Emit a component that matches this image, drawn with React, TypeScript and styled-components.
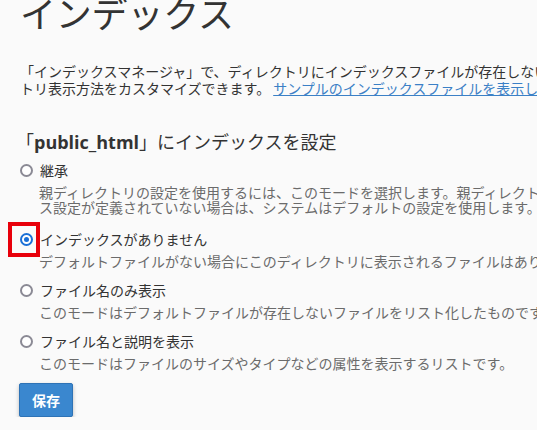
import React, { useState } from 'react'
import styled, { createGlobalStyle } from 'styled-components'

const GlobalStyle = createGlobalStyle`
  html, body {
    margin: 0;
    padding: 0;
    background: #fafafa;
    overflow: hidden;
  }
  body {
    font-family: 'Open Sans', 'Noto Sans CJK JP', sans-serif;
    color: #333333;
  }
`

const Page = styled.div`
  width: 630px;
  padding: 0 0 0 20px;
`

const Title = styled.h1`
  margin: -3px 0 0 0;
  font-size: 36px;
  font-weight: 400;
  line-height: 36px;
  color: #333333;
  letter-spacing: -0.2px;
`

const Intro = styled.p`
  margin: 30px 0 0 0;
  font-size: 14px;
  line-height: 17px;
  color: #333333;
`

const Link = styled.a`
  color: #3b80c6;
  text-decoration: underline;
  margin-left: 3px;
`

const Section = styled.h2`
  margin: 34px 0 0 -4px;
  font-size: 18px;
  font-weight: 400;
  line-height: 22px;
  color: #333333;

  strong {
    font-weight: 700;
  }
`

const OptionList = styled.div`
  display: flex;
  flex-direction: column;
  gap: 11px;
  margin-top: 7px;
`

const Option = styled.label<{ $extra?: number }>`
  position: relative;
  display: flex;
  flex-direction: column;
  margin-bottom: ${({ $extra }) => $extra || 0}px;
  cursor: pointer;
`

const OptionHead = styled.div`
  display: flex;
  align-items: center;
  gap: 7px;
  height: 20px;
  font-size: 14px;
  color: #333333;
`

const Radio = styled.span<{ $checked: boolean }>`
  box-sizing: border-box;
  width: 13px;
  height: 13px;
  border-radius: 50%;
  border: 2px solid ${({ $checked }) => ($checked ? '#1a6fd6' : '#8b8a95')};
  background: #ffffff;
  display: flex;
  align-items: center;
  justify-content: center;

  &::after {
    content: '';
    display: ${({ $checked }) => ($checked ? 'block' : 'none')};
    width: 5px;
    height: 5px;
    border-radius: 50%;
    background: #1a6fd6;
  }
`

const Highlight = styled.span`
  position: absolute;
  left: -12px;
  top: -7px;
  width: 32px;
  height: 35px;
  box-sizing: border-box;
  border: 4px solid #e8000b;
  pointer-events: none;
`

const Description = styled.div`
  margin: 5px 0 0 19px;
  font-size: 14px;
  line-height: 15px;
  color: #6b6b6b;
`

const SaveButton = styled.button`
  margin-top: 12px;
  width: 54px;
  height: 34px;
  margin-left: -1px;
  background: #3a87cf;
  border: 1px solid #2e73b6;
  border-radius: 2px;
  color: #ffffff;
  font-family: 'Open Sans', 'Noto Sans CJK JP', sans-serif;
  font-size: 14px;
  font-weight: 700;
  box-shadow: 0 2px 4px rgba(0, 0, 0, 0.25);
  cursor: pointer;
`

const options = [
  {
    id: 'inherit',
    label: '継承',
    desc: '親ディレクトリの設定を使用するには、このモードを選択します。親ディレクトリにインデックス設定が定義されていない場合は、システムはデフォルトの設定を使用します。',
    extra: 3,
  },
  {
    id: 'noindex',
    label: 'インデックスがありません',
    desc: 'デフォルトファイルがない場合にこのディレクトリに表示されるファイルはありません。',
  },
  {
    id: 'filename',
    label: 'ファイル名のみ表示',
    desc: 'このモードはデフォルトファイルが存在しないファイルをリスト化したものです。',
  },
  {
    id: 'described',
    label: 'ファイル名と説明を表示',
    desc: 'このモードはファイルのサイズやタイプなどの属性を表示するリストです。',
  },
]

const App: React.FC = () => {
  const [selected, setSelected] = useState('noindex')

  return (
    <>
      <GlobalStyle />
      <Page>
        <Title>インデックス</Title>
        <Intro>
          「インデックスマネージャ」で、ディレクトリにインデックスファイルが存在しない場合のディレクトリ表示方法をカスタマイズできます。
          <Link href="#">サンプルのインデックスファイルを表示します。</Link>
        </Intro>
        <Section>
          「<strong>public_html</strong>」にインデックスを設定
        </Section>
        <OptionList>
          {options.map((o) => (
            <Option key={o.id} $extra={o.extra} onClick={() => setSelected(o.id)}>
              <OptionHead>
                <Radio $checked={selected === o.id} />
                {o.label}
              </OptionHead>
              {o.id === 'noindex' && <Highlight />}
              <Description>{o.desc}</Description>
            </Option>
          ))}
        </OptionList>
        <SaveButton>保存</SaveButton>
      </Page>
    </>
  )
}

export default App
